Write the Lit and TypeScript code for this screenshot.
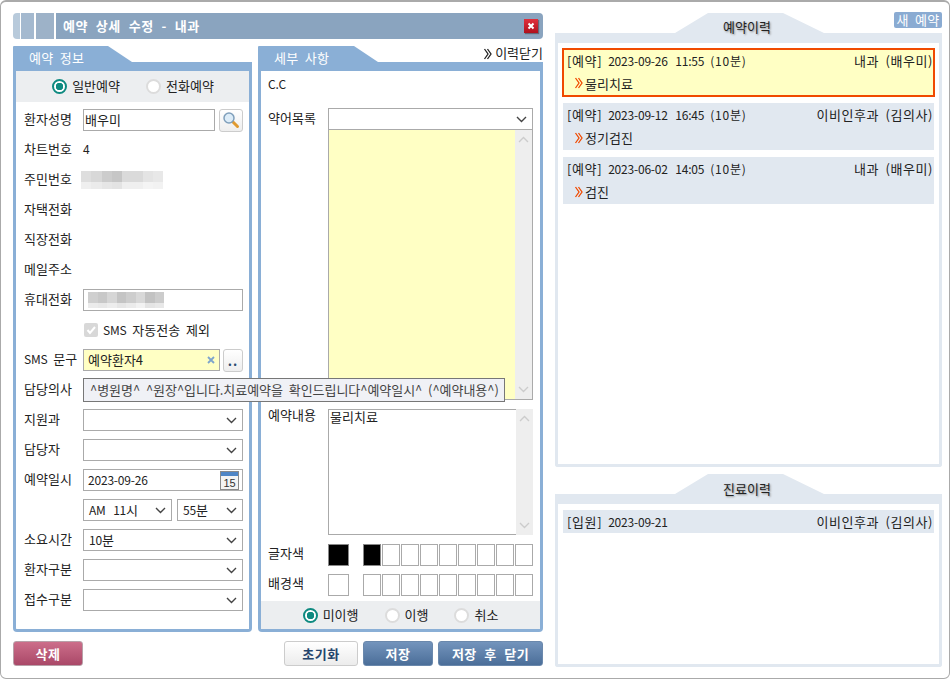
import { LitElement, css, html, nothing } from "lit";
import { customElement } from "lit/decorators.js";

const chevron = html`<svg class="chev" width="10" height="12" viewBox="0 0 10 12"><path d="M1.500 1l3.500 5-3.500 5M4.500 1l3.500 5-3.500 5" fill="none" stroke="currentColor" stroke-width="1.300"/></svg>`;

const upArrow = html`<svg width="11" height="7" viewBox="0 0 11 7"><path d="M1 6l4.500-4.500L10 6" fill="none" stroke="#ccc" stroke-width="1.400"/></svg>`;
const downArrow = html`<svg width="11" height="7" viewBox="0 0 11 7"><path d="M1 1l4.500 4.500L10 1" fill="none" stroke="#ccc" stroke-width="1.400"/></svg>`;

const mosaic1 = [
  ["#dedede", "#d8d8d8", "#cccccc", "#c6c6c6", "#dadada", "#dadada", "#e4e4e4", "#e8e8e8"],
  ["#efefef", "#ebebeb", "#e6e6e6", "#e3e3e3", "#efefef", "#efefef", "#f4f4f4", "#f2f2f2"],
];
const mosaic2 = [
  ["#cfcfcf", "#c8c8c8", "#d6d6d6", "#c4c4c4", "#cdcdcd", "#d8d8d8", "#c2c2c2", "#cccccc"],
  ["#ebebeb", "#e8e8e8", "#ededed", "#e6e6e6", "#ebebeb", "#f2f2f2", "#e4e4e4", "#e8e8e8"],
];

@customElement("app-root")
export class AppRoot extends LitElement {
  static styles = css`
    :host {
      display: block;
      width: 950px;
      height: 680px;
      box-sizing: border-box;
      font-family: "Noto Sans CJK KR", sans-serif;
      font-size: 13px;
      word-spacing: 3px;
      color: #222;
      background: #fff;
    }
    * { box-sizing: border-box; }
    .num { font-size: 12px; letter-spacing: -0.2px; word-spacing: 5px; }
    .dur { font-size: 12px; letter-spacing: 0.8px; word-spacing: 0; }
    .tag { letter-spacing: 0.6px; margin-right: 6px; }
    .window {
      width: 950px;
      height: 679px;
      border: 1px solid #aaa;
      border-top-width: 2px;
      border-radius: 6px;
      padding: 11px 7px 0 12px;
      display: flex;
      gap: 12px;
    }
    .main { width: 530px; display: flex; flex-direction: column; }
    .side { width: 387px; display: flex; flex-direction: column; position: relative; }

    .titlebar { height: 26px; display: flex; gap: 1px; }
    .seg { height: 26px; }
    .seg.a { width: 7px; background: #b8cadb; border-radius: 4px 0 0 4px; }
    .seg.b { width: 13px; background: #a4b9cf; }
    .seg.c { width: 18px; background: #9db2c8; margin-left: 1px; }
    .title {
      flex: 1;
      margin-left: 1px;
      background: #8aa4bf;
      border-radius: 0 4px 4px 0;
      color: #fff;
      font-weight: 700;
      word-spacing: 4.500px;
      letter-spacing: 0.5px;
      display: flex;
      align-items: center;
      justify-content: space-between;
      padding: 0 5px 0 7px;
    }
    .title span { padding-bottom: 2px; }
    .close {
      width: 14px;
      height: 14px;
      background: linear-gradient(#e0303c, #b0101c);
      box-shadow: 1px 1px 1px #667;
      display: flex;
      align-items: center;
      justify-content: center;
    }

    .columns { display: flex; gap: 6px; margin-top: 7px; position: relative; }
    .panel { display: flex; flex-direction: column; }
    .panel.form { width: 239px; }
    .panel.detail { width: 285px; }
    .head { height: 25px; position: relative; }
    .head svg.tab { position: absolute; left: 0; top: 0; }
    .head span.tabtext {
      position: absolute;
      left: 16px;
      top: 2px;
      color: #fff;
      letter-spacing: 0.3px;
    }
    .history-link {
      position: absolute;
      right: 0;
      top: -3px;
      display: flex;
      align-items: center;
      gap: 2px;
      white-space: nowrap;
    }
    .chev { flex: none; }
    .history-link .chev { margin-top: 2px; }
    .body {
      border: 3px solid #8aafd6;
      border-top: 0;
      border-radius: 0 0 4px 4px;
      height: 561px;
      display: flex;
      flex-direction: column;
    }
    .radios {
      height: 31px;
      background: #eceef0;
      display: flex;
      align-items: center;
      justify-content: center;
      padding-left: 1px;
      flex: none;
    }
    .radios.status { height: 28px; margin-top: auto; padding-left: 0; }
    .radio { display: flex; align-items: center; gap: 5px; white-space: nowrap; }
    .radio span:last-child { padding-bottom: 2px; }
    .radios .radio + .radio { margin-left: 26px; }
    .dot {
      width: 15px;
      height: 15px;
      border-radius: 50%;
      border: 2px solid #dcdcdc;
      background: #fff;
      flex: none;
    }
    .dot.on {
      border-color: #0e8a80;
      background: radial-gradient(circle, #0e8a80 0 3.5px, #fff 4px);
    }

    .rows { padding: 3px 6px 0 8px; }
    .row { height: 30px; display: flex; align-items: center; }
    .label { width: 59px; flex: none; white-space: nowrap; padding-bottom: 4px; }
    .plain { padding-bottom: 4px; }
    .field {
      height: 22px;
      border: 1px solid #aaa;
      background: #fff;
      flex: 1;
      min-width: 0;
      display: flex;
      align-items: center;
      padding: 0 4px;
      white-space: nowrap;
    }
    .field > span { padding-bottom: 2px; }
    .select { justify-content: space-between; padding-left: 5px; padding-right: 5px; }
    .select svg { flex: none; }
    .field.yellow { background: #ffffc4; }
    .iconbtn {
      width: 24px;
      height: 23px;
      margin-left: 4px;
      border: 1px solid #ccc;
      border-radius: 3px;
      background: linear-gradient(#fff, #eee);
      display: flex;
      align-items: center;
      justify-content: center;
      flex: none;
    }
    .dots { width: 20px; margin-left: 3px; color: #2a4a70; font-weight: 700; letter-spacing: 1px; }
    .mosaic { display: flex; flex-direction: column; }
    .mosaic div { display: flex; }
    .mosaic i { display: block; }
    .check { display: flex; align-items: center; gap: 5px; padding-left: 1px; }
    .check span { padding-bottom: 2px; }
    .check b {
      width: 14px;
      height: 14px;
      background: #d8d8d8;
      border-radius: 2px;
      display: flex;
      align-items: center;
      justify-content: center;
    }
    .tooltip {
      position: absolute;
      left: 70px;
      top: 332px;
      width: 422px;
      height: 24px;
      background: #f0f1f6;
      border: 1px solid #777;
      color: #444;
      padding: 0 0 2px 6px;
      display: flex;
      align-items: center;
      white-space: nowrap;
      letter-spacing: -0.05px;
      z-index: 2;
    }

    .detail-body { padding: 0 7px; display: flex; flex-direction: column; flex: 1; }
    .cc { height: 37px; padding-top: 3px; line-height: 20px; }
    .label2 { width: 60px; flex: none; white-space: nowrap; }
    .sel-line { display: flex; height: 22px; align-items: center; }
    .sel-line .label2 { padding-bottom: 4px; }
    .sel-line .field { height: 22px; }
    .box-line { display: flex; height: 270px; }
    .memo {
      flex: 1;
      display: flex;
      border: 1px solid #aaa;
      border-top: 0;
    }
    .memo .paper { flex: 1; background: #ffffc4; }
    .bar {
      width: 17px;
      background: #eee;
      display: flex;
      flex-direction: column;
      justify-content: space-between;
      align-items: center;
      padding: 6px 0;
      flex: none;
    }
    .content { display: flex; margin-top: 9px; height: 126px; }
    .content .label2 { line-height: 12px; }
    .content .paper {
      flex: 1;
      border: 1px solid #aaa;
      border-right: 0;
      padding: 0 1px;
      line-height: 14px;
    }
    .color-row { display: flex; height: 22px; align-items: center; margin-top: 8px; }
    .color-row.first { margin-top: 9px; }
    .color-row .label2 { padding-bottom: 6px; }
    .swatch { width: 21px; height: 22px; border: 1px solid #aaa; flex: none; background: #fff; }
    .swatch.black { background: #000; border-color: #888; }
    .palette { display: flex; gap: 1px; margin-left: 14px; }
    .palette .swatch { width: 18px; }

    .actions { display: flex; margin-top: 9px; height: 25px; }
    .btn {
      height: 25px;
      border-radius: 3px;
      color: #fff;
      font-weight: 700;
      display: flex;
      align-items: center;
      justify-content: center;
      letter-spacing: 0.5px;
      word-spacing: 4px;
    }
    .btn.del { width: 70px; background: linear-gradient(#cc6e8a, #aa4868); border: 1px solid #b8a0a8; margin-right: auto; }
    .btn.reset { width: 74px; background: linear-gradient(#fff, #ececec); border: 1px solid #ccc; color: #24446c; }
    .btn.save { width: 70px; margin-left: 5px; background: linear-gradient(#7394bc, #4b6e99); border: 1px solid #6a88ac; }
    .btn.wide { width: 105px; }

    .hist { display: flex; flex-direction: column; position: relative; }
    .hist.one { height: 454px; }
    .hist.two { height: 193px; margin-top: 7px; }
    .hhead { height: 30px; position: relative; flex: none; }
    .hhead svg { position: absolute; left: 0; top: 0; }
    .hhead span {
      position: absolute;
      left: 0;
      right: 0;
      top: 4px;
      text-align: center;
      padding-right: 3px;
      text-shadow: 1px 1px 2px #888;
    }
    .two .hhead span { top: 5px; }
    .hbody {
      flex: 1;
      border: 3px solid #e1e8f0;
      border-top: 0;
      border-radius: 0 0 3px 3px;
      padding: 5px 5px 0;
      display: flex;
      flex-direction: column;
      gap: 7px;
    }
    .two .hbody { padding-top: 6px; }
    .item { background: #e1e8f0; height: 47px; padding: 0 1px 0 4px; flex: none; }
    .item.cur {
      background: #ffffc4;
      border: 2px solid #f04a00;
      height: 49px;
      margin: 0 -1px -1px;
      padding: 0 0 0 3px;
    }
    .item.short { height: 23px; }
    .line {
      height: 22px;
      display: flex;
      justify-content: space-between;
      align-items: center;
      white-space: nowrap;
    }
    .cur .line { height: 21px; }
    .who { letter-spacing: 0.55px; }
    .note { display: flex; align-items: center; gap: 1px; height: 25px; padding-left: 7px; }
    .cur .note { height: 24px; }
    .note .chev { color: #f04a00; }
    .new {
      position: absolute;
      right: 0;
      top: -1px;
      width: 48px;
      height: 16px;
      background: #8aabd2;
      border-radius: 2px;
      color: #fff;
      display: flex;
      align-items: center;
      justify-content: center;
      letter-spacing: 0.3px;
      padding-bottom: 1px;
      z-index: 1;
    }
  `;

  arrow() {
    return html`<svg width="11" height="7" viewBox="0 0 11 7"><path d="M1 1l4.500 4.500L10 1" fill="none" stroke="#444" stroke-width="1.400"/></svg>`;
  }

  select(text: unknown = "", style = "") {
    return html`<div class="field select" style=${style}><span>${text}</span>${this.arrow()}</div>`;
  }

  row(label: unknown, value: unknown = nothing) {
    return html`<div class="row"><span class="label">${label}</span>${value}</div>`;
  }

  mosaic(cells: string[][], cellWidth: number, heights: number[]) {
    return html`<div class="mosaic">
      ${cells.map(
        (line, y) => html`<div>
          ${line.map((c) => html`<i style="width:${cellWidth}px;height:${heights[y]}px;background:${c}"></i>`)}
        </div>`,
      )}
    </div>`;
  }

  item(kind: string, when: string, dur: string, who: string, note?: string, cur = false) {
    return html`<div class="item ${cur ? "cur" : ""} ${note ? "" : "short"}">
      <div class="line">
        <span><span class="tag">[${kind}]</span><span class="num">${when}</span>
          ${dur ? html`<span class="dur">(${dur})</span>` : nothing}</span>
        <span class="who">${who}</span>
      </div>
      ${note ? html`<div class="note">${chevron}<span>${note}</span></div>` : nothing}
    </div>`;
  }

  histHead(label: string) {
    return html`<div class="hhead">
      <svg width="387" height="30" viewBox="0 0 387 30"><path d="M0 20H120L153 0H228L269 20H387V30H0Z" fill="#e1e8f0"/></svg>
      <span>${label}</span>
    </div>`;
  }

  render() {
    const swatches = (first: boolean) =>
      Array.from({ length: 9 }, (_, i) => html`<div class="swatch ${first && i === 0 ? "black" : ""}"></div>`);
    return html`<div class="window">
      <div class="main">
        <div class="titlebar">
          <div class="seg a"></div>
          <div class="seg b"></div>
          <div class="seg c"></div>
          <div class="title">
            <span>예약 상세 수정 - 내과</span>
            <div class="close">
              <svg width="8" height="8" viewBox="0 0 8 8"><path d="M1.500 1.500l5 5M6.500 1.500l-5 5" stroke="#fff" stroke-width="2"/></svg>
            </div>
          </div>
        </div>

        <div class="columns">
          <section class="panel form">
            <div class="head">
              <svg class="tab" width="239" height="25" viewBox="0 0 239 25"><path d="M0 1Q0 0 1 0H95L119 16H239V25H0Z" fill="#8aafd6"/></svg>
              <span class="tabtext">예약 정보</span>
            </div>
            <div class="body">
              <div class="radios">
                <label class="radio"><span class="dot on"></span><span>일반예약</span></label>
                <label class="radio"><span class="dot"></span><span>전화예약</span></label>
              </div>
              <div class="rows">
                ${this.row(
                  "환자성명",
                  html`<div class="field" style="padding-left:1px"><span>배우미</span></div>
                    <div class="iconbtn">
                      <svg width="18" height="18" viewBox="0 0 18 18">
                        <path d="M10.500 10.500l5 5" stroke="#e09a30" stroke-width="3" stroke-linecap="round"/>
                        <circle cx="7" cy="7" r="5" fill="#dcecf8" stroke="#7f9fbb" stroke-width="1.500"/>
                      </svg>
                    </div>`,
                )}
                ${this.row("차트번호", html`<span class="plain num">4</span>`)}
                ${this.row("주민번호", html`<div style="margin-left:-2px">${this.mosaic(mosaic1, 10.250, [11, 7])}</div>`)}
                ${this.row("자택전화")}
                ${this.row("직장전화")}
                ${this.row("메일주소")}
                ${this.row(
                  "휴대전화",
                  html`<div class="field">${this.mosaic(mosaic2, 9.500, [11, 5])}</div>`,
                )}
                ${this.row(
                  "",
                  html`<label class="check">
                    <b><svg width="10" height="10" viewBox="0 0 10 10"><path d="M1.500 5l2.500 3 5-6" fill="none" stroke="#fff" stroke-width="2"/></svg></b>
                    <span><span class="num">SMS</span> 자동전송 제외</span>
                  </label>`,
                )}
                ${this.row(
                  html`<span class="num">SMS</span> 문구`,
                  html`<div class="field yellow" style="justify-content:space-between">
                      <span>예약환자4</span>
                      <svg width="8" height="8" viewBox="0 0 8 8"><path d="M1 1l6 6M7 1l-6 6" stroke="#7da4cc" stroke-width="1.800"/></svg>
                    </div>
                    <div class="iconbtn dots">..</div>`,
                )}
                ${this.row("담당의사", this.select())}
                ${this.row("지원과", this.select())}
                ${this.row("담당자", this.select())}
                ${this.row(
                  "예약일시",
                  html`<div class="field" style="justify-content:space-between;padding-right:3px">
                    <span class="num">2023-09-26</span>
                    <svg width="19" height="19" viewBox="0 0 19 19">
                      <rect x="0.500" y="0.500" width="18" height="18" fill="#f4f4f4" stroke="#8a8a8a"/>
                      <rect x="1" y="1" width="17" height="4" fill="#4f86c6"/>
                      <text x="9.500" y="16" font-size="11" text-anchor="middle" fill="#333" font-family="Liberation Sans">15</text>
                    </svg>
                  </div>`,
                )}
                ${this.row(
                  "",
                  html`<div style="display:flex;gap:5px;flex:1">
                    ${this.select(html`<span class="num">AM 11</span>시`, "flex:none;width:89px")}
                    ${this.select(html`<span class="num">55</span>분`, "flex:none;width:66px")}
                  </div>`,
                )}
                ${this.row("소요시간", this.select(html`<span class="num">10</span>분`))}
                ${this.row("환자구분", this.select())}
                ${this.row("접수구분", this.select())}
              </div>
            </div>
          </section>

          <section class="panel detail">
            <div class="head">
              <svg class="tab" width="285" height="25" viewBox="0 0 285 25"><path d="M0 1Q0 0 1 0H96L120 16H285V25H0Z" fill="#8aafd6"/></svg>
              <span class="tabtext">세부 사항</span>
              <span class="history-link">${chevron}이력닫기</span>
            </div>
            <div class="body">
              <div class="detail-body">
                <div class="cc num">C.C</div>
                <div class="sel-line">
                  <span class="label2">약어목록</span>
                  ${this.select()}
                </div>
                <div class="box-line">
                  <div class="label2"></div>
                  <div class="memo">
                    <div class="paper"></div>
                    <div class="bar">${upArrow}${downArrow}</div>
                  </div>
                </div>
                <div class="content">
                  <span class="label2">예약내용</span>
                  <div class="paper">물리치료</div>
                  <div class="bar">${upArrow}${downArrow}</div>
                </div>
                <div class="color-row first">
                  <span class="label2">글자색</span>
                  <div class="swatch black"></div>
                  <div class="palette">${swatches(true)}</div>
                </div>
                <div class="color-row">
                  <span class="label2">배경색</span>
                  <div class="swatch"></div>
                  <div class="palette">${swatches(false)}</div>
                </div>
              </div>
              <div class="radios status">
                <label class="radio"><span class="dot on"></span><span>미이행</span></label>
                <label class="radio"><span class="dot"></span><span>이행</span></label>
                <label class="radio"><span class="dot"></span><span>취소</span></label>
              </div>
            </div>
          </section>

          <div class="tooltip">^병원명^ ^원장^입니다.치료예약을 확인드립니다^예약일시^ (^예약내용^)</div>
        </div>

        <div class="actions">
          <div class="btn del">삭제</div>
          <div class="btn reset">초기화</div>
          <div class="btn save">저장</div>
          <div class="btn save wide">저장 후 닫기</div>
        </div>
      </div>

      <div class="side">
        <div class="new">새 예약</div>
        <div class="hist one">
          ${this.histHead("예약이력")}
          <div class="hbody">
            ${this.item("예약", "2023-09-26 11:55", "10분", "내과 (배우미)", "물리치료", true)}
            ${this.item("예약", "2023-09-12 16:45", "10분", "이비인후과 (김의사)", "정기검진")}
            ${this.item("예약", "2023-06-02 14:05", "10분", "내과 (배우미)", "검진")}
          </div>
        </div>
        <div class="hist two">
          ${this.histHead("진료이력")}
          <div class="hbody">
            ${this.item("입원", "2023-09-21", "", "이비인후과 (김의사)")}
          </div>
        </div>
      </div>
    </div>`;
  }
}
